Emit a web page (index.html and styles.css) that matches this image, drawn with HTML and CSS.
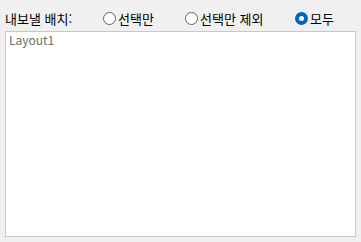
FILE: index.html
```html
<!DOCTYPE html>
<html lang="ko">

<head>
    <meta charset="UTF-8">
    <title>내보낼 배치</title>
    <link rel="stylesheet" href="styles.css">
</head>

<body>
    <div class="panel">
        <div class="header">
            <span class="label">내보낼 배치:</span>
            <div class="option opt-selected-only">
                <span class="radio"></span>
                <span class="text">선택만</span>
            </div>
            <div class="option opt-except">
                <span class="radio"></span>
                <span class="text">선택만 제외</span>
            </div>
            <div class="option">
                <span class="radio checked"></span>
                <span class="text">모두</span>
            </div>
        </div>
        <div class="layout-box">
            <div class="placeholder">Layout1</div>
        </div>
    </div>
</body>

</html>
```

FILE: styles.css
```css
body {
    margin: 0;
    background-color: #f0f0f0;
    font-family: "Noto Sans CJK KR", "Noto Sans", sans-serif;
    font-size: 13px;
    color: #000;
}

.panel {
    padding: 5px;
}

.header {
    display: flex;
    align-items: center;
    height: 26px;
}

.label {
    width: 98px;
}

.option {
    display: flex;
    align-items: center;
}

.opt-selected-only {
    width: 82px;
}

.opt-except {
    width: 110px;
}

.radio {
    width: 13px;
    height: 13px;
    box-sizing: border-box;
    border: 1px solid #646464;
    border-radius: 50%;
    background-color: #fff;
    margin-right: 2px;
}

.radio.checked {
    border: 4px solid #0067c0;
    background-color: #fff;
}

.layout-box {
    height: 206px;
    box-sizing: border-box;
    border: 1px solid #c8c8c8;
    background-color: #fff;
    padding: 1px 3px 0;
}

.placeholder {
    color: #6d6d6d;
    font-size: 12px;
    line-height: 14px;
}
```
